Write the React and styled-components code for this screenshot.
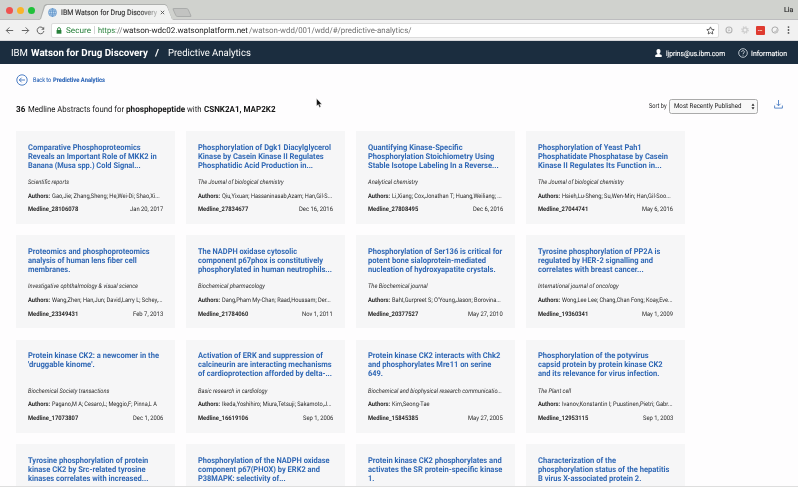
import React, { useLayoutEffect, useRef } from 'react';
import styled, { createGlobalStyle } from 'styled-components';

const GlobalStyle = createGlobalStyle`
  * { box-sizing: border-box; }
  html, body { margin: 0; background: #fefdfe; overflow: hidden; }
  body { font-family: Roboto, "Liberation Sans", sans-serif; text-rendering: geometricPrecision; }
  svg { display: block; flex: none; }
`;

const Window = styled.div`
  width: 798px;
  height: 487px;
  overflow: hidden;
  display: flex;
  flex-direction: column;
  border-bottom: 1px solid #dedede;
`;

const TextRun = styled.span`
  display: block;
  flex: none;
  width: ${(p) => p.$width}px;
  white-space: pre;
  font-weight: ${(p) => (p.$bold ? 700 : 400)};
  color: ${(p) => p.$color || 'inherit'};
  margin-left: ${(p) => p.$gap || 0}px;
`;
const Glyphs = styled.span`
  display: inline-block;
  vertical-align: top;
  transform-origin: 0 50%;
`;

/* Text condensed or widened so that it fills the given width. */
function Fitted({ width, children, ...rest }) {
  const ref = useRef(null);
  useLayoutEffect(() => {
    const el = ref.current;
    el.style.transform = 'none';
    const natural = el.getBoundingClientRect().width;
    el.style.transform = `scaleX(${width / natural})`;
  }, [width, children]);
  return (
    <TextRun $width={width} {...rest}>
      <Glyphs ref={ref}>{children}</Glyphs>
    </TextRun>
  );
}

const TabStrip = styled.div`
  height: 20px;
  flex: none;
  display: flex;
  align-items: flex-end;
  background: #d0d2ce;
  border-bottom: 1px solid #bdbdbf;
  padding: 0 4.5px 0 6px;
`;
const Lights = styled.div`
  display: flex;
  gap: 4px;
  align-self: center;
  margin-top: 1px;
`;
const Light = styled.i`
  width: 7px;
  height: 7px;
  border-radius: 50%;
  background: ${(p) => p.$color};
`;
const TabEdge = styled.div`
  width: 137px;
  height: 16px;
  margin: 0 0 -1px 3px;
  padding: 1px 0 0 1px;
  background: #aeb0ae;
  clip-path: polygon(0 100%, 2px 94%, 6px 10%, 8px 0, 127px 0, 129px 10%, 134px 94%, 137px 100%);
`;
const Tab = styled.div`
  width: 135px;
  height: 15px;
  background: #f1f2f1;
  clip-path: polygon(0 100%, 2px 94%, 6px 10%, 8px 0, 126px 0, 128px 10%, 133px 94%, 135px 100%);
  display: flex;
  align-items: center;
  padding: 0 0 1px 9px;
  font-size: 7.6px;
  color: #333;
`;
const TabTitle = styled.div`
  margin-left: 3.5px;
  mask-image: linear-gradient(90deg, #000 82%, rgba(0, 0, 0, 0.25));
  -webkit-text-stroke: 0.15px #333;
`;
const Close = styled.div` margin-left: 3px; `;
const NewTab = styled.div`
  width: 16px;
  height: 9px;
  margin: 0 0 2px -1px;
  background: #c2c3c1;
  border: 1px solid #aaacab;
  border-radius: 2px;
  transform: skewX(24deg);
`;
const Profile = styled.div`
  margin-left: auto;
  align-self: center;
  font-size: 7px;
  color: #333;
  padding-top: 1px;
  -webkit-text-stroke: 0.2px #333;
`;

const Toolbar = styled.div`
  height: 21px;
  flex: none;
  display: flex;
  align-items: center;
  background: #f1f1f1;
  border-bottom: 1px solid #d6d6d9;
  padding: 0 6px 0 5px;
`;
const NavIcons = styled.div`
  display: flex;
  gap: 6.5px;
  width: 46px;
  flex: none;
`;
const Address = styled.div`
  display: flex;
  align-items: center;
  width: 668px;
  height: 15px;
  background: #fff;
  border: 1px solid #dcdcdc;
  border-radius: 2px;
  padding: 0 3px 0 4px;
  font-size: 8px;
`;
const Divider = styled.i`
  width: 1px;
  height: 8px;
  margin-left: 3px;
  background: #d5d5d5;
`;
const Star = styled.div` margin-left: auto; `;
const Extensions = styled.div`
  display: flex;
  align-items: center;
  margin-left: 6px;
  gap: 7.8px;
`;
const RedBadge = styled.div`
  width: 9px;
  height: 9px;
  margin: 0 -1px;
  background: #df3b30;
  border-radius: 1px;
  color: #fff;
  font-size: 4px;
  font-weight: 700;
  line-height: 9px;
  text-align: center;
`;

const AppBar = styled.header`
  height: 23px;
  flex: none;
  display: flex;
  align-items: center;
  background: #1b2d3f;
  color: #fff;
  font-size: 10px;
  padding: 1px 11px 0;
`;
const Account = styled.div`
  display: flex;
  align-items: center;
  margin-left: auto;
  font-size: 7.4px;
  -webkit-text-stroke: 0.1px #fff;
`;
const Help = styled(Account)` margin-left: 13px; `;

const Page = styled.main`
  flex: 1;
  display: flex;
  flex-direction: column;
  padding: 10px 15px 0 16px;
  color: #171717;
`;
const BackLink = styled.a`
  display: flex;
  align-items: center;
  height: 12px;
  font-size: 6.3px;
  color: #3068b8;
  -webkit-text-stroke: 0.1px #3068b8;
`;
const SummaryBar = styled.div`
  display: flex;
  align-items: center;
  height: 17px;
  margin: 11.5px 0 16.5px;
`;
const Summary = styled.div`
  display: flex;
  font-size: 8.5px;
  padding-top: 7px;
`;
const SortBy = styled.div`
  display: flex;
  align-items: center;
  margin-left: auto;
  font-size: 6.7px;
`;
const Select = styled.div`
  display: flex;
  align-items: center;
  width: 89px;
  height: 15px;
  margin-left: 1.5px;
  padding: 0 2px 0 4px;
  border: 1px solid #aaa;
  border-radius: 2.5px;
  background: #f8f8f8;
`;
const SelectArrows = styled.div` margin-left: auto; `;
const Download = styled.div` margin-left: 16.5px; margin-top: -3px; `;

const CardGrid = styled.section`
  display: grid;
  grid-template-columns: repeat(4, 159px);
  grid-auto-rows: 93px;
  gap: 11.4px 11px;
`;
const Card = styled.article`
  display: flex;
  flex-direction: column;
  background: #f6f6f7;
  padding: 11.6px 12px 0 12.3px;
`;
const Title = styled.h3`
  margin: 0;
  height: 33.3px;
  font-size: 8px;
  line-height: 9px;
  color: #3068b5;
`;
const Meta = styled.div`
  display: flex;
  height: 13.8px;
  line-height: 13.8px;
  font-size: 6.3px;
  color: #2a2a2a;
  font-style: ${(p) => (p.$italic ? 'italic' : 'normal')};
  justify-content: ${(p) => (p.$spread ? 'space-between' : 'flex-start')};
`;
const Pointer = styled.div`
  position: absolute;
  left: 316px;
  top: 98px;
`;

/* Each text is paired with its width in thirds of a pixel. */
const CARDS = [
  { t: [['Comparative Phosphoproteomics', 338], ['Reveals an Important Role of MKK2 in', 386], ['Banana (Musa spp.) Cold Signal...', 338]], j: ['Scientific reports', 123], a: ['Gao,Jie; Zhang,Sheng; He,Wei-Di; Shao,Xi...', 324], m: 'Medline_28106078', d: ['Jan 20, 2017', 100] },
  { t: [['Phosphorylation of Dgk1 Diacylglycerol', 399], ['Kinase by Casein Kinase II Regulates', 377], ['Phosphatidic Acid Production in...', 345]], j: ['The Journal of biological chemistry', 257], a: ['Qiu,Yixuan; Hassaninasab,Azam; Han,Gil-S...', 331], m: 'Medline_27834677', d: ['Dec 16, 2016', 102] },
  { t: [['Quantifying Kinase-Specific', 284], ['Phosphorylation Stoichiometry Using', 379], ['Stable Isotope Labeling In a Reverse...', 392]], j: ['Analytical chemistry', 150], a: ['Li,Xiang; Cox,Jonathan T; Huang,Weiliang; ...', 330], m: 'Medline_27808495', d: ['Dec 6, 2016', 91] },
  { t: [['Phosphorylation of Yeast Pah1', 311], ['Phosphatidate Phosphatase by Casein', 390], ['Kinase II Regulates Its Function in...', 371]], j: ['The Journal of biological chemistry', 257], a: ['Hsieh,Lu-Sheng; Su,Wen-Min; Han,Gil-Soo...', 327], m: 'Medline_27044741', d: ['May 6, 2016', 93] },
  { t: [['Proteomics and phosphoproteomics', 365], ['analysis of human lens fiber cell', 326], ['membranes.', 127]], j: ['Investigative ophthalmology & visual science', 330], a: ['Wang,Zhen; Han,Jun; David,Larry L; Schey,...', 332], m: 'Medline_23349431', d: ['Feb 7, 2013', 91] },
  { t: [['The NADPH oxidase cytosolic', 297], ['component p67phox is constitutively', 375], ['phosphorylated in human neutrophils...', 402]], j: ['Biochemical pharmacology', 201], a: ['Dang,Pham My-Chan; Raad,Houssam; Der...', 327], m: 'Medline_21784060', d: ['Nov 1, 2011', 92] },
  { t: [['Phosphorylation of Ser136 is critical for', 403], ['potent bone sialoprotein-mediated', 354], ['nucleation of hydroxyapatite crystals.', 383]], j: ['The Biochemical journal', 179], a: ["Baht,Gurpreet S; O'Young,Jason; Borovina...", 327], m: 'Medline_20377527', d: ['May 27, 2010', 104] },
  { t: [['Tyrosine phosphorylation of PP2A is', 367], ['regulated by HER-2 signalling and', 345], ['correlates with breast cancer...', 317]], j: ['International journal of oncology', 242], a: ['Wong,Lee Lee; Chang,Chan Fong; Koay,Eve...', 332], m: 'Medline_19360341', d: ['May 1, 2009', 93] },
  { t: [['Protein kinase CK2: a newcomer in the', 393], ["'druggable kinome'.", 200]], j: ['Biochemical Society transactions', 244], a: ['Pagano,M A; Cesaro,L; Meggio,F; Pinna,L A', 315], m: 'Medline_17073807', d: ['Dec 1, 2006', 91] },
  { t: [['Activation of ERK and suppression of', 375], ['calcineurin are interacting mechanisms', 401], ['of cardioprotection afforded by delta-...', 402]], j: ['Basic research in cardiology', 208], a: ['Ikeda,Yoshihiro; Miura,Tetsuji; Sakamoto,J...', 329], m: 'Medline_16619106', d: ['Sep 1, 2006', 91] },
  { t: [['Protein kinase CK2 interacts with Chk2', 397], ['and phosphorylates Mre11 on serine', 370], ['649.', 45]], j: ['Biochemical and biophysical research communicatio...', 402], a: ['Kim,Seong-Tae', 113], m: 'Medline_15845385', d: ['May 27, 2005', 104] },
  { t: [['Phosphorylation of the potyvirus', 332], ['capsid protein by protein kinase CK2', 374], ['and its relevance for virus infection.', 364]], j: ['The Plant cell', 99], a: ['Ivanov,Konstantin I; Puustinen,Pietri; Gabr...', 332], m: 'Medline_12953115', d: ['Sep 1, 2003', 91] },
  { t: [['Tyrosine phosphorylation of protein', 361], ['kinase CK2 by Src-related tyrosine', 353], ['kinases correlates with increased...', 361]] },
  { t: [['Phosphorylation of the NADPH oxidase', 395], ['component p67(PHOX) by ERK2 and', 366], ['P38MAPK: selectivity of...', 263]] },
  { t: [['Protein kinase CK2 phosphorylates and', 401], ['activates the SR protein-specific kinase', 403], ['1.', 19]] },
  { t: [['Characterization of the', 234], ['phosphorylation status of the hepatitis', 394], ['B virus X-associated protein 2.', 310]] },
];

function AbstractCard({ item }) {
  return (
    <Card>
      <Title>
        {item.t.map(([text, w]) => (
          <Fitted key={text} width={w / 3} $bold>{text}</Fitted>
        ))}
      </Title>
      {item.j && (
        <>
          <Meta $italic><Fitted width={item.j[1] / 3}>{item.j[0]}</Fitted></Meta>
          <Meta>
            <Fitted width={22.2} $bold>Authors:</Fitted>
            <Fitted width={item.a[1] / 3 - 0.2} $gap={1.8}>{item.a[0]}</Fitted>
          </Meta>
          <Meta $spread>
            <Fitted width={50.3} $bold>{item.m}</Fitted>
            <Fitted width={item.d[1] / 3}>{item.d[0]}</Fitted>
          </Meta>
        </>
      )}
    </Card>
  );
}

const Icon = ({ w, h = w, color = '#666', sw = 1, children }) => (
  <svg width={w} height={h} viewBox={`0 0 ${w} ${h}`} fill="none" stroke={color} strokeWidth={sw}>{children}</svg>
);

export default function App() {
  return (
    <Window>
      <GlobalStyle />
      <TabStrip>
        <Lights><Light $color="#ef5350" /><Light $color="#f9b429" /><Light $color="#20c13a" /></Lights>
        <TabEdge>
          <Tab>
            <Icon w={9} color="#5f94c8" sw={0.7}>
              <circle cx="4.5" cy="4.5" r="4" fill="#bcd6ee" />
              <path d="M.8 3.2h7.4M.8 5.8h7.4M4.5.5v8M4.5.5C1.7 3 1.7 6 4.5 8.5M4.5.5C7.3 3 7.3 6 4.5 8.5" />
            </Icon>
            <TabTitle><Fitted width={96}>IBM Watson for Drug Discovery</Fitted></TabTitle>
            <Close><Icon w={5} color="#555" sw={0.9}><path d="M.8.8l3.4 3.4M4.2.8L.8 4.2" /></Icon></Close>
          </Tab>
        </TabEdge>
        <NewTab />
        <Profile><Fitted width={9.5}>Lia</Fitted></Profile>
      </TabStrip>
      <Toolbar>
        <NavIcons>
          <Icon w={9} color="#666"><path d="M8.2 4.5H1.3M4.4 1.4L1.3 4.5l3.1 3.1" /></Icon>
          <Icon w={9} color="#666"><path d="M.8 4.5h6.9M4.6 1.4l3.1 3.1-3.1 3.1" /></Icon>
          <Icon w={9} color="#666"><path d="M7.5 2.7A3.4 3.4 0 1 0 7.9 5" /><path d="M8.2.8v3H5.2z" fill="#666" stroke="none" /></Icon>
        </NavIcons>
        <Address>
          <Icon w={6} h={7} color="#27813b" sw={0.9}><path d="M1.6 3V2a1.4 1.4 0 0 1 2.8 0v1" /><path d="M.6 3h4.8v3.7H.6z" fill="#27813b" stroke="none" /></Icon>
          <Fitted width={25} $gap={3.5} $color="#27813b">Secure</Fitted>
          <Divider />
          <Fitted width={17} $gap={3.5} $color="#27813b">https</Fitted>
          <Fitted width={7.5} $gap={0.4} $color="#777">://</Fitted>
          <Fitted width={125} $gap={0.4} $color="#222">watson-wdc02.watsonplatform.net</Fitted>
          <Fitted width={162.5} $gap={0.5} $color="#707070">/watson-wdd/001/wdd/#/predictive-analytics/</Fitted>
          <Star><Icon w={9} color="#555" sw={0.9}><path d="M4.5.9l1.1 2.4 2.6.3-1.9 1.8.5 2.6-2.3-1.3L2.2 8l.5-2.6L.8 3.6l2.6-.3z" /></Icon></Star>
        </Address>
        <Extensions>
          <Icon w={8} color="#b4b4b4" sw={1.1}><circle cx="4" cy="4" r="3" /><path d="M4 2v3M2.8 4L4 5.2 5.2 4" strokeWidth="0.7" /></Icon>
          <Icon w={8} color="#cbcbcb" sw={1.2}><circle cx="4" cy="4" r="2.1" /><circle cx="4" cy="4" r="3.2" strokeDasharray="1.3 1.21" /></Icon>
          <RedBadge>•••</RedBadge>
          <Icon w={8} color="#aaa" sw={1}><circle cx="4" cy="4" r="3.1" /><circle cx="5" cy="4.8" r="2" fill="#c9c9c9" stroke="none" /><circle cx="3.7" cy="3.4" r="1.6" fill="#f5f5f5" stroke="none" /></Icon>
          <Icon w={3} h={8} color="none"><g fill="#555"><circle cx="1.5" cy="1.1" r=".9" /><circle cx="1.5" cy="4" r=".9" /><circle cx="1.5" cy="6.9" r=".9" /></g></Icon>
        </Extensions>
      </Toolbar>
      <AppBar>
        <Fitted width={17}>IBM</Fitted>
        <Fitted width={116.9} $gap={2.6} $bold>Watson for Drug Discovery</Fitted>
        <Fitted width={4} $gap={8} $bold>/</Fitted>
        <Fitted width={82.8} $gap={9}>Predictive Analytics</Fitted>
        <Account>
          <Icon w={7} h={8} color="none"><path d="M3.5 0C1.9 0 1.4 1.1 1.5 2.5c.1 1.2.5 1.9 1.2 2.4L.3 6v2h6.4V6L4.3 4.9c.7-.5 1.1-1.2 1.2-2.4C5.6 1.1 5.1 0 3.5 0z" fill="#fff" /></Icon>
          <Fitted width={59} $gap={4}>ljprins@us.ibm.com</Fitted>
        </Account>
        <Help>
          <Icon w={10} color="#dfe6ec" sw={0.8}><circle cx="5" cy="5" r="4.3" /><path d="M3.6 4c0-1.8 2.8-1.8 2.8-.1C6.4 5 5 4.9 5 6.1M5 6.8v.8" /></Icon>
          <Fitted width={36} $gap={2.7}>Information</Fitted>
        </Help>
      </AppBar>
      <Page>
        <BackLink>
          <Icon w={12} color="#3a70bd" sw={0.9}><circle cx="6" cy="6" r="5.2" /><path d="M9 6H3.3M5.6 3.7L3.3 6l2.3 2.3" /></Icon>
          <Fitted width={18.2} $gap={5}>Back to</Fitted>
          <Fitted width={52} $gap={1.8} $bold>Predictive Analytics</Fitted>
        </BackLink>
        <SummaryBar>
          <Summary>
            <Fitted width={9.3} $bold>36</Fitted>
            <Fitted width={96} $gap={2.4}>Medline Abstracts found for</Fitted>
            <Fitted width={59.2} $gap={2.2} $bold>phosphopeptide</Fitted>
            <Fitted width={14.5} $gap={2.2}>with</Fitted>
            <Fitted width={71.5} $gap={2.3} $bold>CSNK2A1, MAP2K2</Fitted>
          </Summary>
          <SortBy>
            <Fitted width={17.6}>Sort by</Fitted>
            <Select>
              <Fitted width={67.5}>Most Recently Published</Fitted>
              <SelectArrows><Icon w={4} h={7} color="none"><path d="M2 .4l1.5 2.3h-3zM2 6.6L.5 4.3h3z" fill="#222" /></Icon></SelectArrows>
            </Select>
            <Download><Icon w={9} color="#4d7fc4" sw={0.9}><path d="M4.5 0v5.7M2.5 3.8l2 2 2-2M.6 5.5v2.6h7.8V5.5" /></Icon></Download>
          </SortBy>
        </SummaryBar>
        <CardGrid>
          {CARDS.map((item) => <AbstractCard key={item.t[0][0]} item={item} />)}
        </CardGrid>
      </Page>
      <Pointer>
        <Icon w={7} h={10} color="#fff" sw={0.4}><path d="M.6.5v7.6l1.7-1.5 1.2 2.8 1.3-.6-1.2-2.6h2.3z" fill="#111" /></Icon>
      </Pointer>
    </Window>
  );
}
